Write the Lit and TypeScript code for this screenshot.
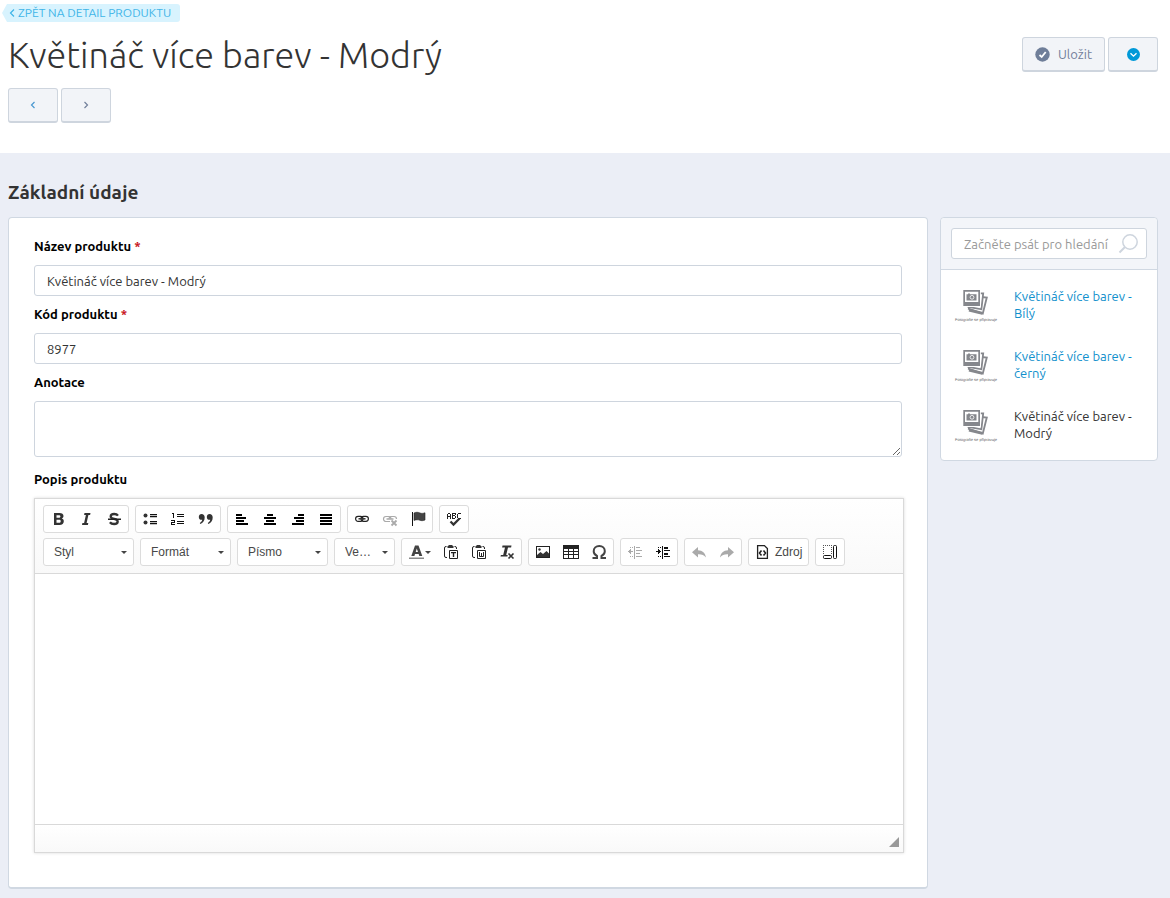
import { LitElement, html, css, svg, nothing } from "lit";
import { customElement, property } from "lit/decorators.js";

const icons: Record<string, unknown> = {
  bold: svg`<path fill-rule="evenodd" fill="#333" d="M4 2h5.500c2.500 0 4 1 4 3 0 1.200-.6 2-1.600 2.500 1.300.5 1.900 1.500 1.900 2.700 0 2.300-1.600 3.800-4.300 3.800H4zM6.500 4.200v2.500h2.300c1 0 1.600-.4 1.600-1.300 0-.8-.6-1.200-1.600-1.200zM6.500 8.800v2.900h2.600c1 0 1.600-.5 1.600-1.500s-.6-1.400-1.600-1.400z"/>`,
  italic: svg`<path fill="#333" d="M6.500 2h6l-.4 2h-1.700l-1.800 8h1.700l-.4 2H4l.4-2h1.700l1.800-8H6.100z"/>`,
  strike: svg`<path fill="none" stroke="#333" stroke-width="2.300" d="M12 4.600C11.200 3.500 9.800 3 8.200 3 6 3 4.700 4 4.700 5.400c0 3.400 7 1.700 7 5 0 1.600-1.500 2.600-3.600 2.600-1.800 0-3.300-.6-4.200-1.800"/><path fill="#222" d="M2 7.500h13V9H2z"/>`,
  bullets: svg`<g fill="#333"><circle cx="3.500" cy="4.500" r="2"/><circle cx="3.500" cy="11.500" r="2"/></g><path fill="#111" d="M8 3h7v1.200H8zM8 5h7v1.200H8zM8 10h7v1.200H8zM8 12h7v1.200H8z"/>`,
  numbers: svg`<path fill="#111" shape-rendering="crispEdges" d="M2 2h2v5H3V3H2zM1 9h4v3H2v1h3v1H1v-3h3v-1H1zM7 3h7v1H7zM7 5h7v1H7zM7 10h7v1H7zM7 12h7v1H7z"/>`,
  quote: svg`<path fill="#333" d="M3.500 3C5.500 3 6.700 4.500 6.700 6.500c0 3-1.700 5.600-4.400 6.500l-.5-1c1.400-.7 2.300-1.900 2.400-3.200C2.300 9.200.8 7.900.8 5.900.8 4.200 2 3 3.500 3zM11.500 3c2 0 3.200 1.500 3.200 3.500 0 3-1.700 5.600-4.400 6.500l-.5-1c1.400-.7 2.300-1.900 2.400-3.200-1.900.4-3.400-.9-3.400-2.900C8.800 4.200 10 3 11.500 3z"/>`,
  left: svg`<path d="M2 3h6v2H2zM2 6h10v2H2zM2 9h8v2H2zM2 12h12v2H2z"/>`,
  center: svg`<path d="M5 3h6v2H5zM2 6h12v2H2zM4 9h8v2H4zM2 12h12v2H2z"/>`,
  right: svg`<path d="M8 3h6v2H8zM4 6h10v2H4zM6 9h8v2H6zM2 12h12v2H2z"/>`,
  justify: svg`<path d="M2 3h12v2H2zM2 6h12v2H2zM2 9h12v2H2zM2 12h12v2H2z"/>`,
  link: svg`<g fill="none" stroke="#222" stroke-width="1.200"><rect x="1.600" y="5.300" width="7.400" height="5" rx="2.500"/><rect x="7" y="5.300" width="7.400" height="5" rx="2.500"/></g><path stroke="#333" stroke-width="1.500" d="M4.500 7.800h7"/>`,
  unlink: svg`<g fill="none" stroke="#aaa" stroke-width="1.200"><path d="M8 10.500H4a2.500 2.500 0 0 1 0-5h2.500A2.500 2.500 0 0 1 9 8M7 8a2.500 2.500 0 0 1 2.500-2.500H12A2.500 2.500 0 0 1 14.500 8"/><path d="M4.500 8h7" stroke-width="1.500"/><path d="m9.500 9.500 5 5m0-5-5 5" stroke-width="1.800"/></g>`,
  flag: svg`<path fill="#111" d="M2 1h1v14H2z"/><path fill="#444" stroke="#222" stroke-width=".6" d="M4 2c2-1 4-1 6 0 1.500.6 3 .5 5-.2V9c-2 .8-3.600.9-5.300.2C8 8.500 6 8.600 4 9.400z"/>`,
  spell: svg`<path fill="none" stroke="#222" shape-rendering="crispEdges" d="M1.500 8V3.500l1-1h1l1 1V8m-3-2.500h3M6.500 2v5.500h2l1-1v-1l-1-1h-2m2 0 1-1v-1h-3M14.500 2.500h-2l-1 1v3l1 1h2"/><path fill="none" stroke="#333" stroke-width="2.300" d="m4.500 10.500 3 3 6-6"/>`,
  color: svg`<path fill="#444" fill-rule="evenodd" d="M6 1.500h3.500L13.300 12h-3l-.6-2H6l-.6 2H2.300zM7.800 4.600 6.700 8h2.300z"/><path fill="#888" d="M0 13.500h15V15H0z"/>`,
  pasteText: svg`<path fill="none" stroke="#222" d="M4 13.500H3A1.500 1.500 0 0 1 1.500 12V4A1.500 1.500 0 0 1 3 2.500h.5m8 0h.5A1.500 1.500 0 0 1 13.500 4v1"/><path fill="#333" d="M4.500 2.500 6 1h3l1.500 1.500V4h-6z"/><path fill="#fff" stroke="#222" d="M6.500 6.500h8v8h-8z"/><path fill="#222" d="M8 8h5v1.200h-1.800V13H9.800V9.200H8z"/>`,
  pasteWord: svg`<path fill="none" stroke="#222" d="M4 13.500H3A1.500 1.500 0 0 1 1.500 12V4A1.500 1.500 0 0 1 3 2.500h.5m8 0h.5A1.500 1.500 0 0 1 13.500 4v1"/><path fill="#333" d="M4.500 2.500 6 1h3l1.500 1.500V4h-6z"/><path fill="#fff" stroke="#222" d="M6.500 6.500h8v8h-8z"/><path fill="none" stroke="#222" d="M8.500 8v4.500h4V8m-2 1v3.500"/>`,
  clear: svg`<path fill="#333" d="M3.500 1.500h9l-.4 2H9L7.200 11h1.500l-.3 1.500H1.500L1.900 11h2.300L6 3.500H3.100z"/><path fill="none" stroke="#333" stroke-width="1.600" d="m9.500 9.500 5 5m0-5-5 5"/>`,
  image: svg`<path fill="#222" fill-rule="evenodd" d="M1 2h14v12H1zm1 1v10h12V3z"/><path fill="#333" d="M2 13v-2l3.500-3 2.500 2 3.500-3 2.500 2.500V13z"/><circle cx="4.500" cy="5.500" r="1.200" fill="#333"/>`,
  table: svg`<path fill="#222" shape-rendering="crispEdges" fill-rule="evenodd" d="M0 1h16v14H0zM1 5v2h4V5zm5 0v2h4V5zm5 0v2h4V5zM1 8v2h4V8zm5 0v2h4V8zm5 0v2h4V8zM1 11v3h4v-3zm5 0v3h4v-3zm5 0v3h4v-3z"/>`,
  omega: svg`<path fill="none" stroke="#444" stroke-width="2" d="M1.500 14H6v-2C4.100 11 2.700 9.200 2.700 7.200 2.700 4.300 5 2 8.300 2s5.500 2.300 5.500 5.200c0 2-1.400 3.800-3.300 4.800v2H15"/>`,
  outdent: svg`<g fill="#aaa" shape-rendering="crispEdges"><path d="M7 2h1v13H7zM9 3h4v1H9zM9 6h6v1H9zM9 9h4v1H9zM9 12h6v1H9zM3 3h1v1H3zM5 3h1v1H5zM3 12h1v1H3zM5 12h1v1H5zM1 7h5v1H1zM2 6h1v3H2zM3 5h1v5H3z"/></g>`,
  indent: svg`<g fill="#111" shape-rendering="crispEdges"><path d="M7 2h1v13H7zM9 3h4v1H9zM9 6h6v1H9zM9 9h4v1H9zM9 12h6v1H9zM9 4h4v1H9zM9 10h4v1H9zM3 3h1v1H3zM5 3h1v1H5zM3 12h1v1H3zM5 12h1v1H5zM1 7h5v1H1zM4 6h1v3H4zM3 5h1v5H3z"/></g>`,
  undo: svg`<path fill="#aaa" d="M7 3v3.200c4.500.2 7.300 2.600 8 7.300-2-2.500-4.500-3.500-8-3.300v3.300L1 8.200z"/>`,
  redo: svg`<path fill="#aaa" d="M9 3v3.200C4.500 6.400 1.700 8.800 1 13.500c2-2.500 4.500-3.500 8-3.300v3.300l6-5.300z"/>`,
  source: svg`<path fill="none" stroke="#222" stroke-width="1.300" d="M2.600 1.600h6.800l3 3v9.800H2.600z"/><path fill="none" stroke="#222" stroke-width="1.600" d="M6.500 6.500 4.500 9l2 2.500M8.500 6.500l2 2.500-2 2.500"/>`,
  blocks: svg`<path fill="#555" shape-rendering="crispEdges" d="M1 1h1v1H1zM3 1h1v1H3zM5 1h1v1H5zM7 1h1v1H7zM9 1h1v1H9zM1 3h1v1H1zM1 5h1v1H1zM1 7h1v1H1zM1 9h1v1H1zM9 3h1v1H9zM9 5h1v1H9zM9 7h1v1H9zM9 9h1v1H9z"/><g fill="none" stroke="#111"><rect x="1.500" y="11.500" width="8" height="3" rx="1"/><rect x="11.500" y="1.500" width="3" height="13" rx="1"/></g>`,
};

const icon = (name: string) =>
  html`<svg class="icon" width="16" height="16" viewBox="0 0 16 16" aria-hidden="true">${icons[name]}</svg>`;

const caret = html`<svg class="caret" width="6" height="3" viewBox="0 0 6 3" aria-hidden="true"><path fill="#444" d="M0 0h6L3 3z"/></svg>`;

type Tool = { icon: string; label: string; off?: boolean; text?: string; menu?: boolean };

const row1: Tool[][] = [
  [{ icon: "bold", label: "Tučné" }, { icon: "italic", label: "Kurzíva" }, { icon: "strike", label: "Přeškrtnuté" }],
  [{ icon: "bullets", label: "Odrážky" }, { icon: "numbers", label: "Číslování" }, { icon: "quote", label: "Citace" }],
  [
    { icon: "left", label: "Zarovnat vlevo" },
    { icon: "center", label: "Zarovnat na střed" },
    { icon: "right", label: "Zarovnat vpravo" },
    { icon: "justify", label: "Zarovnat do bloku" },
  ],
  [{ icon: "link", label: "Odkaz" }, { icon: "unlink", label: "Odstranit odkaz", off: true }, { icon: "flag", label: "Záložka" }],
  [{ icon: "spell", label: "Kontrola pravopisu" }],
];

const row2: Tool[][] = [
  [
    { icon: "color", label: "Barva textu", menu: true },
    { icon: "pasteText", label: "Vložit jako čistý text" },
    { icon: "pasteWord", label: "Vložit z Wordu" },
    { icon: "clear", label: "Odstranit formátování" },
  ],
  [{ icon: "image", label: "Obrázek" }, { icon: "table", label: "Tabulka" }, { icon: "omega", label: "Speciální znaky" }],
  [{ icon: "outdent", label: "Zmenšit odsazení", off: true }, { icon: "indent", label: "Zvětšit odsazení" }],
  [{ icon: "undo", label: "Zpět", off: true }, { icon: "redo", label: "Znovu", off: true }],
  [{ icon: "source", label: "Zdroj", text: "Zdroj" }],
  [{ icon: "blocks", label: "Ukázat bloky" }],
];

@customElement("rich-editor")
class RichEditor extends LitElement {
  static styles = css`
    :host { display: block; border: 1px solid #d9d9d9; box-shadow: 0 0 3px rgba(0, 0, 0, 0.15); background: #fff; font: 12px/16px "Liberation Sans", Arial, sans-serif; color: #484848; }
    * { box-sizing: border-box; }
    .toolbar { display: flex; flex-direction: column; gap: 5px; padding: 6px 8px 7px; border-bottom: 1px solid #d9d9d9; background: linear-gradient(#fff, #f9f9f9); }
    .row { display: flex; flex-wrap: wrap; gap: 5px 6px; }
    .group { display: flex; height: 28px; border: 1px solid #dcdcdc; border-radius: 3px; background: #fff; }
    .tool { display: flex; align-items: center; justify-content: center; gap: 4px; min-width: 28px; padding: 0 6px; border: 0; background: none; font: inherit; color: inherit; }
    .tool.menu { gap: 0; padding: 0 6px 0 7px; }
    .icon, .caret { display: block; flex: none; }
    .combo { display: grid; align-items: center; width: 91px; height: 28px; border: 1px solid #dcdcdc; border-radius: 3px; background: #fff; }
    .combo.small { width: 61px; }
    .combo select, .combo .caret { grid-area: 1 / 1; }
    .combo .caret { justify-self: end; margin-right: 6px; pointer-events: none; }
    .combo select { appearance: none; width: 100%; height: 100%; margin: 0; padding: 0 22px 0 10px; border: 0; background: none; font: inherit; color: inherit; text-overflow: ellipsis; overflow: hidden; white-space: nowrap; }
    .area { display: block; width: 100%; height: 250px; padding: 16px; border: 0; resize: none; background: #fff; font: 13px/20px "Liberation Sans", Arial, sans-serif; }
    .foot { display: flex; justify-content: flex-end; align-items: flex-end; height: 28px; padding: 0 4px 5px; border-top: 1px solid #d9d9d9; background: linear-gradient(#fff, #f9f9f9); }
    .grip { display: block; }
  `;

  group(tools: Tool[]) {
    return html`<div class="group">
      ${tools.map(
        (t) => html`<button type="button" class="tool ${t.menu ? "menu" : ""}" aria-label=${t.label} ?disabled=${t.off}>${icon(t.icon)}${t.text ?? nothing}${t.menu ? caret : nothing}</button>`
      )}
    </div>`;
  }

  combo(label: string, small = false) {
    return html`<div class="combo ${small ? "small" : ""}"><select aria-label=${label}><option>${label}</option></select>${caret}</div>`;
  }

  render() {
    return html`
      <div class="toolbar">
        <div class="row">${row1.map((g) => this.group(g))}</div>
        <div class="row">
          ${this.combo("Styl")}${this.combo("Formát")}${this.combo("Písmo")}${this.combo("Velikost", true)}
          ${row2.map((g) => this.group(g))}
        </div>
      </div>
      <textarea class="area" aria-label="Popis produktu"></textarea>
      <div class="foot"><svg class="grip" width="10" height="10" viewBox="0 0 10 10" aria-hidden="true"><path fill="#999" d="M10 0v10H0z"/></svg></div>
    `;
  }
}

@customElement("variant-item")
class VariantItem extends LitElement {
  @property() name = "";
  @property({ type: Boolean }) current = false;

  static styles = css`
    :host { display: flex; align-items: center; gap: 16px; height: 60px; padding: 0 14px; font-size: 13px; line-height: 17px; }
    .thumb { display: block; flex: none; overflow: visible; }
    .caption { font: 4px "Liberation Sans", Arial, sans-serif; text-rendering: geometricPrecision; }
    .name { color: #0f8fcc; text-decoration: none; }
    .name.current { color: #333; }
  `;

  render() {
    return html`
      <svg class="thumb" width="43" height="34" viewBox="0 0 43 34" aria-hidden="true">
        <g fill="#fff" stroke="#85878c" stroke-width="1.800">
          <path d="m16 8 15.800 1.500-4 16-14-4.600z"/>
          <path d="M12 5.300h16.200l-1.800 16-13-2.300z"/>
        </g>
        <path stroke="#85878c" stroke-width="3" d="m14 22 13.500 3.400"/>
        <path fill="#fff" d="M7.500 1.500h18.300v17.500H7.500z"/>
        <path fill="#85878c" fill-rule="evenodd" d="M8.300 2h16.700v16H8.300zm1.700 1.700v10.300h13.300V3.700z"/>
        <path fill="#85878c" d="M11.500 6.200h1.500V5.500h2v.7h6.500v6.300h-10z"/>
        <circle cx="17" cy="9.300" r="1.900" fill="#85878c" stroke="#fff" stroke-width=".8"/>
        <text class="caption" x="0" y="33" fill="#666">Fotografie se připravuje</text>
      </svg>
      <a class="name ${this.current ? "current" : ""}" href="#">${this.name}</a>
    `;
  }
}

@customElement("app-root")
class AppRoot extends LitElement {
  static styles = css`
    :host { display: flex; flex-direction: column; min-height: 100vh; background: #ebeef6; color: #333; font: 13px/17px Ubuntu, "Noto Sans", "Open Sans", sans-serif; }
    * { box-sizing: border-box; }
    .header { background: #fff; padding: 4px 12px 30px 8px; }
    .back { display: flex; align-items: center; gap: 3px; width: fit-content; height: 18px; margin-left: -6px; padding: 0 9px 0 7px; border-radius: 0 3px 3px 0; background: #d8f3fe; clip-path: polygon(0 50%, 5px 0, 100% 0, 100% 100%, 5px 100%); color: #3fb5e8; font-size: 12px; line-height: 18px; text-transform: uppercase; text-decoration: none; }
    .titlebar { display: flex; align-items: flex-start; justify-content: space-between; gap: 16px; padding-top: 9px; }
    .title { margin: 0; font-size: 36px; line-height: 48px; font-weight: 300; }
    .actions { display: flex; gap: 3px; padding-top: 6px; }
    .pager { display: flex; gap: 3px; padding-top: 9px; }
    .btn { display: flex; align-items: center; justify-content: center; gap: 8px; min-width: 50px; height: 35px; padding: 0 12px; border: 1px solid #ced5de; border-bottom-width: 2px; border-radius: 3px; background: #f2f4f8; color: #72809b; font: inherit; }
    .content { padding: 28px 12px 10px 8px; }
    .section { margin: 0 0 13px; font-size: 19px; line-height: 23px; font-weight: 600; }
    .columns { display: grid; grid-template-columns: minmax(0, 1fr) 218px; align-items: start; gap: 12px; }
    .panel { border: 1px solid #d0d8e2; border-radius: 4px; background: #fff; }
    .form { padding: 20px 25px 34px; border-bottom-width: 2px; }
    .field { display: block; width: 100%; height: 31px; margin: 10px 0; padding: 0 12px; border: 1px solid #ced5de; border-radius: 3px; background: #fff; color: #333; font: inherit; }
    .note { height: 56px; margin-bottom: 14px; padding: 6px 12px; resize: vertical; }
    .label { display: block; font-weight: 700; color: #000; }
    .req { color: #c8161d; }
    .editor { margin: 10px -2px 0 0; }
    .search { display: grid; align-items: center; padding: 10px; border-bottom: 1px solid #d0d8e2; border-radius: 4px 4px 0 0; background: #f3f5f9; }
    .search .field, .lens { grid-area: 1 / 1; }
    .search .field { margin: 0; padding-right: 32px; }
    .search .field::placeholder { color: #999; opacity: 1; }
    .lens { justify-self: end; margin-right: 8px; pointer-events: none; }
    .list { padding: 5px 0; }
  `;

  render() {
    const chevron = (d: string, color: string) =>
      html`<svg width="6" height="8" viewBox="0 0 6 8" fill="none" stroke=${color} stroke-width="1.200" aria-hidden="true"><path d=${d}/></svg>`;
    const prev = "M4.500 1 1.500 4l3 3";
    const next = "m1.500 1 3 3-3 3";
    return html`
      <header class="header">
        <a class="back" href="#">${chevron("M5 .5 1.500 4 5 7.500", "#3fb5e8")}<span>Zpět na detail produktu</span></a>
        <div class="titlebar">
          <h1 class="title">Květináč více barev - Modrý</h1>
          <div class="actions">
            <button type="button" class="btn">
              <svg width="15" height="15" viewBox="0 0 15 15" aria-hidden="true"><circle cx="7.500" cy="7.500" r="7.200" fill="#6f7e99"/><path fill="none" stroke="#fff" stroke-width="1.800" d="m4.500 8 2.200 2 4-5"/></svg>
              Uložit
            </button>
            <button type="button" class="btn" aria-label="Další možnosti">
              <svg width="13" height="13" viewBox="0 0 13 13" aria-hidden="true"><circle cx="6.500" cy="6.500" r="6.500" fill="#0099d8"/><path fill="none" stroke="#fff" stroke-width="1.300" d="m3.500 5.200 3 3 3-3"/></svg>
            </button>
          </div>
        </div>
        <div class="pager">
          <button type="button" class="btn" aria-label="Předchozí">${chevron(prev, "#4a98d0")}</button>
          <button type="button" class="btn" aria-label="Následující">${chevron(next, "#72809b")}</button>
        </div>
      </header>
      <main class="content">
        <h2 class="section">Základní údaje</h2>
        <div class="columns">
          <form class="panel form">
            <label class="label" for="name">Název produktu <span class="req">*</span></label>
            <input class="field" id="name" type="text" value="Květináč více barev - Modrý" />
            <label class="label" for="code">Kód produktu <span class="req">*</span></label>
            <input class="field" id="code" type="text" value="8977" />
            <label class="label" for="note">Anotace</label>
            <textarea class="field note" id="note"></textarea>
            <label class="label" for="description">Popis produktu</label>
            <rich-editor class="editor" id="description"></rich-editor>
          </form>
          <aside class="panel">
            <div class="search">
              <input class="field" type="text" aria-label="Hledání" placeholder="Začněte psát pro hledání" />
              <svg class="lens" width="21" height="20" viewBox="0 0 21 20" fill="none" stroke="#ced5de" stroke-width="1.500" aria-hidden="true"><circle cx="12" cy="8" r="7.200"/><path stroke-width="2" d="M7 13 1.500 18.500"/></svg>
            </div>
            <div class="list">
              <variant-item name="Květináč více barev - Bílý"></variant-item>
              <variant-item name="Květináč více barev - černý"></variant-item>
              <variant-item name="Květináč více barev - Modrý" current></variant-item>
            </div>
          </aside>
        </div>
      </main>
    `;
  }
}
